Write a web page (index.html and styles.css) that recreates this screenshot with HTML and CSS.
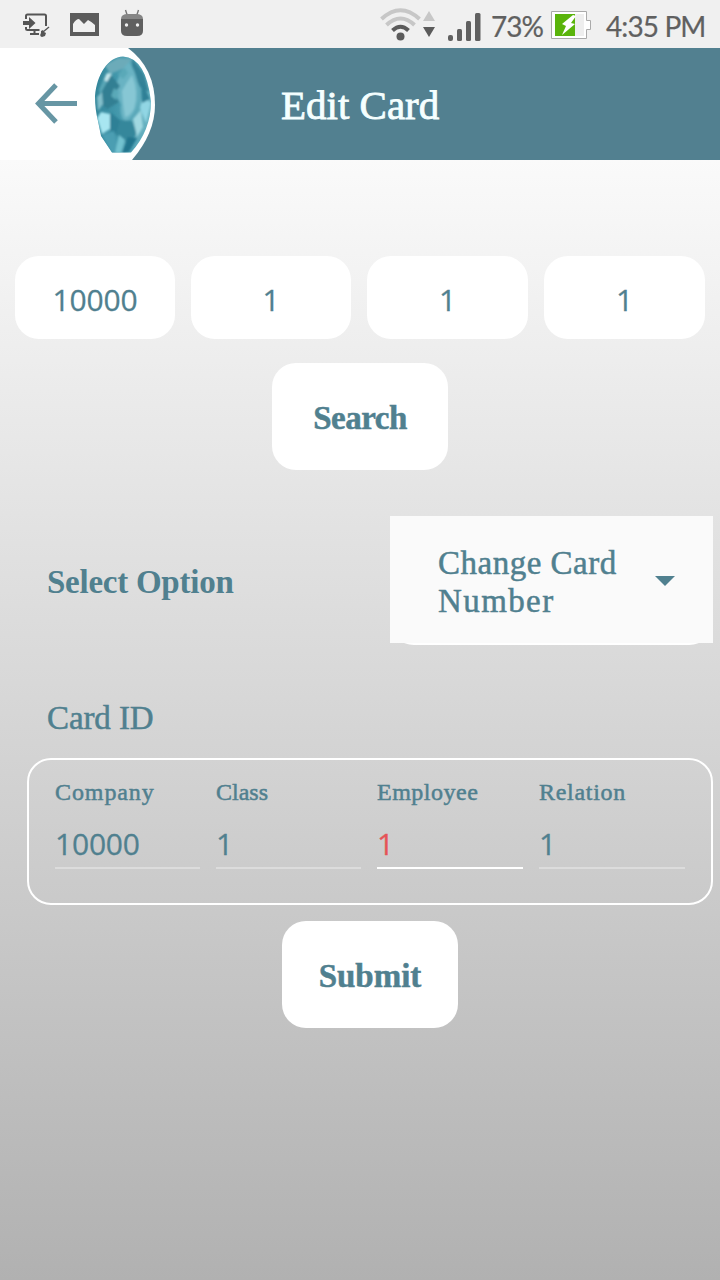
FILE: index.html
```html
<!DOCTYPE html>
<html lang="en">
<head>
<meta charset="utf-8">
<title>Edit Card</title>
<link rel="stylesheet" href="styles.css">
</head>
<body>
<div class="status">
  <svg class="notifications" width="160" height="48" viewBox="0 0 160 48">
    <g fill="none" stroke="#555" stroke-width="2">
      <path d="M26 19v-3q0-1.500 1.500-1.500h17q1.500 0 1.500 1.500v10M26 27v2q0 1 1.500 1h12M30 34h9M34.500 30v4"/>
      <path d="M43 32l6-5" stroke-width="1.300"/>
    </g>
    <path fill="#555" d="M23 21h6v-4l6.500 6-6.500 6v-4h-6zM41 31l2-1 1 2 2 1-1 3-3 1q-3-1-1-4z"/>
    <path fill="#5c5c5c" fill-rule="evenodd" d="M70 13h29v23H70zM73 32V24q3-5 6-5l5 5 4-4q4 2 7 5v7z"/>
    <path d="M125.500 10l2 6M138.500 10l-2 6" stroke="#777" stroke-width="1.400"/>
    <path fill="#606060" d="M121 19h22v12q0 5-6 5h-10q-6 0-6-5z"/>
    <path fill="#858585" d="M121 19q0-5 7-5h8q7 0 7 5z"/>
    <g fill="#f0f0f0"><circle cx="126.500" cy="25" r="1.700"/><circle cx="137.500" cy="25" r="1.700"/></g>
  </svg>
  <div class="system">
    <svg width="105" height="48" viewBox="378 0 105 48">
      <g fill="none" stroke-width="4">
        <path d="M381.500 19Q400.500 1.500 419.500 19" stroke="#c7c7c7"/>
        <path d="M386.500 25Q400.500 12 414.500 25" stroke="#c7c7c7"/>
        <path d="M392.500 30.500Q400.500 23 408.500 30.500" stroke="#5b5b5b"/>
      </g>
      <circle cx="400.500" cy="36.500" r="4" fill="#5b5b5b"/>
      <path d="M429 11l6 10h-12z" fill="#c7c7c7"/><path d="M423 27h12l-6 10z" fill="#5b5b5b"/>
      <g fill="#606060"><rect x="448" y="35" width="5" height="6" rx="2"/><rect x="457" y="29" width="5" height="12" rx="1.500"/><rect x="466" y="21" width="5" height="20" rx="1.500"/><rect x="475" y="13" width="5.500" height="28" rx="1.500"/></g>
    </svg>
    <span class="percent">73%</span>
    <svg class="battery" width="42" height="48" viewBox="550 0 42 48">
      <path d="M551.500 11.500h35v9h4v9h-4v9h-35z" fill="#fff" stroke="#aaa"/>
      <path d="M555 14h20v22h-20z" fill="#5ab40b"/><path d="M575 14h9v22h-9z" fill="#eee"/>
      <path d="M573 15l-11 9 4 2-4 9 13-11-4-1 5-7z" fill="#fff"/>
    </svg>
    <span class="clock">4:35 PM</span>
  </div>
</div>

<header class="header">
  <svg class="logo" width="160" height="112" viewBox="0 0 160 112">
    <defs>
      <clipPath id="gem"><path d="M123 8.500C108 9 97 26 95 48q0 14 3 25l3 15 11 16.500h19q20-22 20-51Q146 10 123 8.500z"/></clipPath>
      <linearGradient id="gemFill" x2="1"><stop stop-color="#2f8195"/><stop offset=".4" stop-color="#4297ab"/><stop offset="1" stop-color="#71b8c6"/></linearGradient>
      <filter id="soft"><feGaussianBlur stdDeviation="1.300"/></filter>
    </defs>
    <path d="M0 0h128Q155 20 155 57 155 85 132 112H0z" fill="#fff"/>
    <path d="M56 37L38.500 55.500 56 74M38 55.500h39" fill="none" stroke="#6796a4" stroke-width="5"/>
    <g clip-path="url(#gem)">
      <path d="M90 0h65v112H90z" fill="url(#gemFill)"/>
      <g filter="url(#soft)">
        <path d="M105 17l13-7 14 1-7 9-15 6z" fill="#6cabb9"/>
        <path d="M132 10l12 16 5 18-9-5-8-16z" fill="#348398"/>
        <path d="M129 14q11 15 9 38-3 17-13 22-6-8-4-18-7-9-4-22 5-14 12-20z" fill="#69b3c3"/>
        <path d="M132 27q7 17 2 34-4 7-9 8l-2-14-1-12 4-7z" fill="#87c7d4"/>
        <path d="M106 26l-7 16 4 10 8-11z" fill="#5aa7b7"/><path d="M107 25l5 1-4 8-4-2z" fill="#c5e7ec"/>
        <path d="M111 27l9 11-6 8 5 8-12 7-10-9z" fill="#337f93"/>
        <path d="M114 40l5 4-3 8-5-4zM125 20l3 5-5 6-5-5z" fill="#5aa9b8"/>
        <path d="M101 64l9 2v15l-8 5-5-16z" fill="#a8e6f1"/>
        <path d="M110 64l11 9-3 14-8-4z" fill="#2e8096"/>
        <path d="M120 72l12 1 5 12-9 11-12-9z" fill="#35879b"/>
        <path d="M133 71l8-9 2 17-6 10z" fill="#a0d8e1"/>
        <path d="M143 48l8 7-5 20-6-15z" fill="#91d6e4"/><path d="M141 32l9 19-8 4z" fill="#2f8096"/>
        <path d="M102 87l12-4 5 22h-7z" fill="#4b9eb2"/><path d="M119 87l6 5-4 13h-6z" fill="#73c2d0"/>
        <path d="M128 89l9 1-8 14-7 1z" fill="#20758d"/><path d="M97 49l5-5 1 12-5 7z" fill="#83bfcb"/>
      </g>
    </g>
  </svg>
  <h1 class="title">Edit Card</h1>
</header>

<main class="main">
  <div class="codes"><div class="code">10000</div><div class="code">1</div><div class="code">1</div><div class="code">1</div></div>
  <button class="button search">Search</button>
  <div class="option">
    <div class="option-label">Select Option</div>
    <div class="select-wrap"><div class="select"><div>Change Card<br><span class="second-line">Number</span></div><span class="caret"></span></div></div>
  </div>
  <h2 class="card-title">Card ID</h2>
  <div class="fields">
    <div class="field"><label class="company">Company</label><div class="value">10000</div></div>
    <div class="field"><label class="class-label">Class</label><div class="value">1</div></div>
    <div class="field active"><label class="employee">Employee</label><div class="value">1</div></div>
    <div class="field"><label class="relation">Relation</label><div class="value">1</div></div>
  </div>
  <button class="button submit">Submit</button>
</main>
</body>
</html>
```
FILE: styles.css
```css
* { box-sizing: border-box; }
body {
  margin: 0;
  width: 720px;
  height: 1280px;
  overflow: hidden;
  color: #50808f;
  font-family: "Liberation Serif", serif;
  font-size: 33px;
  -webkit-text-stroke: 0.5px currentColor;
}
svg { display: block; flex: none; }
.status {
  display: flex;
  justify-content: space-between;
  height: 48px;
  background: #f0f0f0;
  color: #606060;
  font-family: Lato, sans-serif;
  font-size: 28px;
  line-height: 53px;
  -webkit-text-stroke: 0.2px currentColor;
}
.system { display: flex; width: 342px; }
.percent { width: 67px; padding-left: 8px; white-space: nowrap; letter-spacing: -1px; }
.clock { padding-left: 14px; white-space: nowrap; letter-spacing: -0.9px; }
.header { display: flex; height: 112px; background: #528090; color: #f5ffff; }
.title {
  margin: 0 0 0 121px;
  font-size: 41px;
  font-weight: 400;
  line-height: 115px;
  -webkit-text-stroke: 0.8px currentColor;
}
.main { height: 1120px; padding-top: 96px; background: linear-gradient(#fafafa, #b1b1b1); }
.codes {
  display: grid;
  grid-template-columns: 160px 160px 161px 161px;
  gap: 16px;
  padding: 0 15px;
}
.code, .value { font-family: "Open Sans", sans-serif; font-size: 30px; letter-spacing: -0.2px; -webkit-text-stroke: 0.3px currentColor; }
.code { height: 83px; border-radius: 24px; background: #fff; line-height: 87px; text-align: center; }
.button {
  display: block;
  width: 176px;
  height: 107px;
  padding: 4px 0 0;
  border: 0;
  border-radius: 24px;
  background: #fff;
  color: inherit;
  font: 700 33px "Liberation Serif", serif;
  letter-spacing: -0.5px;
}
.search { margin: 24px 0 46px 272px; }
.option { display: flex; height: 129px; padding-left: 47px; }
.option-label { width: 343px; font-weight: 700; line-height: 133px; letter-spacing: -0.25px; -webkit-text-stroke: 0; }
.select-wrap { width: 323px; height: 129px; border-radius: 0 0 24px 24px; background: #fff; }
.select {
  display: flex;
  align-items: center;
  justify-content: space-between;
  height: 127px;
  padding: 4px 38px 0 48px;
  background: #fafafa;
  line-height: 38px;
  letter-spacing: 0.5px;
}
.second-line { letter-spacing: 1.4px; }
.caret { margin-top: -2px; border: 10px solid transparent; border-top-color: #50808f; border-bottom: 0; }
.card-title { height: 38px; margin: 54px 0 21px 47px; font-size: 33px; font-weight: 400; line-height: 38px; letter-spacing: -0.1px; }
.fields {
  display: grid;
  grid-template-columns: 145px 145px 146px 146px;
  gap: 16px;
  width: 686px;
  height: 147px;
  margin-left: 27px;
  padding: 18px 26px;
  border: 2px solid #fff;
  border-radius: 24px;
}
.field label { display: block; height: 30px; font-size: 24px; line-height: 28px; }
.field .company { letter-spacing: 0.9px; }
.field .employee { letter-spacing: 0.5px; }
.field .relation { letter-spacing: 0.7px; }
.value { height: 61px; border-bottom: 2px solid #dcdcdc; line-height: 71px; }
.active .value { border-color: #fff; color: #e55358; }
.submit { margin: 16px 0 0 282px; letter-spacing: 0; }
```
